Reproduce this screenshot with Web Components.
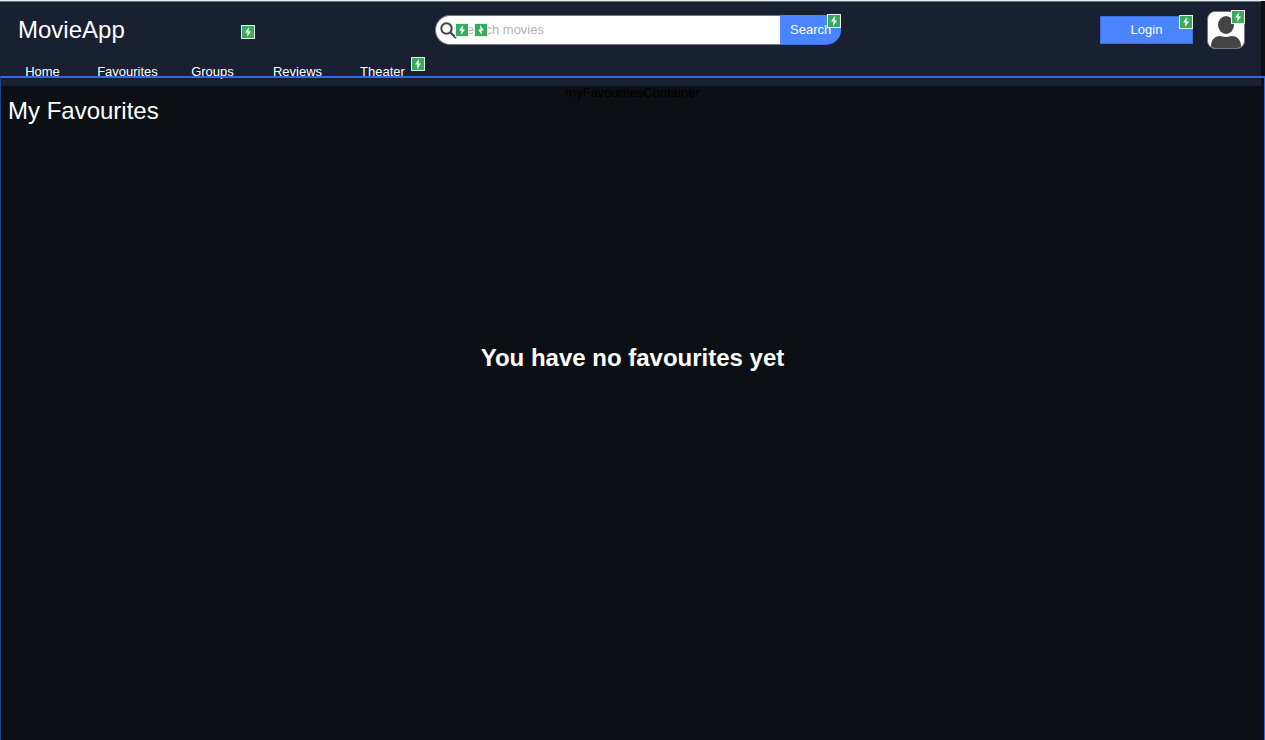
<!DOCTYPE html>
<html lang="en">
<head>
<meta charset="utf-8">
<title>MovieApp</title>
<style>
  html { height: 100%; }
  body { margin: 0; min-height: 100%; display: flex; background: #0c1014; font: 13px/16px "Liberation Sans", Arial, sans-serif; color: #fff; }
</style>
</head>
<body>
<movie-page></movie-page>
<script>
const define = (name, html) => customElements.define(name, class extends HTMLElement {
  constructor() {
    super();
    const t = document.createElement('template');
    t.innerHTML = html;
    this.attachShadow({ mode: 'open' }).append(t.content.cloneNode(true));
  }
});

define('action-badge', `
  <style>
    :host { display: block; box-sizing: border-box; width: 14px; height: 14px; border: 1px solid #e6f5ea; background: #38ab5c; }
    svg { display: block; width: 12px; height: 12px; }
    :host([flip]) svg { transform: scaleX(-1); }
  </style>
  <svg viewBox="0 0 12 12" aria-hidden="true"><path d="M7 1 3 6.5h2.5L5 11l4-5.5H6.5z" fill="#fff"/></svg>`);

define('app-brand', `
  <style>
    :host { display: block; position: relative; width: 240px; font-size: 24px; line-height: 28px; }
    .name { padding-left: 3px; }
    action-badge { position: absolute; right: 0; top: 9px; }
  </style>
  <div class="name"><slot></slot></div><action-badge></action-badge>`);

define('search-bar', `
  <style>
    :host { display: block; position: relative; }
    form { display: flex; height: 30px; margin: 0; }
    .field { flex: 1; display: flex; align-items: center; box-sizing: border-box; background: #fff; border: 1px solid #777; border-right: 0; border-radius: 15px 0 0 15px; padding-left: 4px; }
    .field svg { width: 17px; height: 17px; flex: none; }
    input { flex: 1; min-width: 0; border: 0; padding: 0; margin-left: 1px; background: none; font: inherit; color: #333; outline: 0; }
    input::placeholder { color: #b3b3b3; opacity: 1; }
    button { width: 61px; padding: 0 10px; border: 0; border-bottom: 1px solid #3d70df; border-radius: 0 0 15px 0; background: #4b84ff; color: #fff; font: inherit; text-align: left; }
    action-badge { position: absolute; }
    .one { left: 20px; top: 8px; } .two { left: 39px; top: 8px; } .three { right: 0; top: -1px; }
  </style>
  <form role="search">
    <div class="field">
      <svg viewBox="0 0 17 17" aria-hidden="true"><circle cx="6.5" cy="6.5" r="5.2" fill="none" stroke="#444" stroke-width="2"/><path d="m10.5 10.5 5.500 5.5" stroke="#444" stroke-width="2.2"/></svg>
      <input type="text" placeholder="Search movies" aria-label="Search movies">
    </div>
    <button type="button">Search</button>
  </form>
  <action-badge class="one"></action-badge><action-badge class="two" flip></action-badge><action-badge class="three"></action-badge>`);

define('account-actions', `
  <style>
    :host { display: flex; justify-content: flex-end; align-items: center; gap: 14px; padding-right: 16px; }
    div { position: relative; }
    button { display: block; border: 0; padding: 0; font: inherit; color: #fff; }
    .login { width: 93px; height: 28px; background: #4b84ff; border: 1px solid #3d70df; }
    .avatar { box-sizing: border-box; width: 38px; height: 38px; border: 1px solid #777; border-radius: 8px; overflow: hidden; background: #fff; }
    .avatar svg { display: block; width: 36px; height: 36px; }
    action-badge { position: absolute; right: 0; top: -1px; }
  </style>
  <div><button class="login" type="button">Login</button><action-badge></action-badge></div>
  <div><button class="avatar" type="button" aria-label="Profile"><svg viewBox="0 0 36 36" aria-hidden="true"><ellipse cx="18" cy="13" rx="8" ry="9" fill="#444"/><path d="M3 37v-3c0-7 5-10 9-10 2 0 3 1 6 1s4-1 6-1c4 0 9 3 9 10v3z" fill="#444"/></svg></button><action-badge></action-badge></div>`);

define('main-nav', `
  <style>
    :host { display: block; }
    nav { position: relative; display: grid; grid-template-columns: repeat(5, 1fr); width: 425px; }
    a { color: #fff; text-decoration: none; text-align: center; padding: 5px 0 6px; }
    action-badge { position: absolute; right: 0; top: -2px; }
  </style>
  <nav aria-label="Main"><a href="#">Home</a><a href="#">Favourites</a><a href="#">Groups</a><a href="#">Reviews</a><a href="#">Theater</a><action-badge></action-badge></nav>`);

define('app-header', `
  <style>
    :host { display: block; background: #182032; margin-right: 4px; border-top: 1px solid #68727b; }
    .top { display: grid; grid-template-columns: 1fr 406px 1fr; align-items: center; height: 56px; padding-left: 15px; border-bottom: 1px solid #151c2b; }
  </style>
  <header>
    <div class="top"><app-brand>MovieApp</app-brand><search-bar></search-bar><account-actions></account-actions></div>
    <main-nav></main-nav>
  </header>`);

define('favourites-panel', `
  <style>
    :host { display: block; text-align: center; }
    .label { color: #000; line-height: 14px; }
    h1 { margin: 0; padding-left: 8px; font-weight: 400; font-size: 24px; line-height: 22px; text-align: left; }
    p { margin: 222px 0 0; font-weight: 700; font-size: 24px; line-height: 28px; }
  </style>
  <main><div class="label">myFavouritesContainer</div><h1>My Favourites</h1><p><slot></slot></p></main>`);

define('movie-page', `
  <style>
    :host { display: block; position: relative; flex: 1; box-sizing: border-box; border-top: 1px solid #e9f0f0; }
    .outline { position: absolute; inset: 75px 0 0; border: solid #2d6ae0; border-width: 2px 1px 0; border-left-color: #1b428e; pointer-events: none; }
  </style>
  <app-header></app-header>
  <favourites-panel>You have no favourites yet</favourites-panel>
  <div class="outline"></div>`);
</script>
</body>
</html>
